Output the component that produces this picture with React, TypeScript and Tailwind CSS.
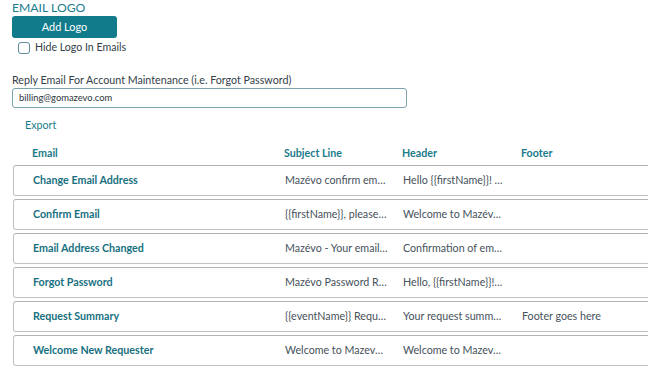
import React from "react";

const rows = [
  { name: "Change Email Address", subject: "Mazévo confirm em…", header: "Hello {{firstName}}! …", footer: "" },
  { name: "Confirm Email", subject: "{{firstName}}, please…", header: "Welcome to Mazév…", footer: "" },
  { name: "Email Address Changed", subject: "Mazévo - Your email…", header: "Confirmation of em…", footer: "" },
  { name: "Forgot Password", subject: "Mazévo Password R…", header: "Hello, {{firstName}}!…", footer: "" },
  { name: "Request Summary", subject: "{{eventName}} Requ…", header: "Your request summ…", footer: "Footer goes here" },
  { name: "Welcome New Requester", subject: "Welcome to Mazev…", header: "Welcome to Mazev…", footer: "" },
];

export default function App() {
  return (
    <div
      className="w-[648px] h-[372px] overflow-hidden bg-white text-[#4a5661]"
      style={{ fontFamily: "Lato, 'Open Sans', sans-serif" }}
    >
      <div className="pl-[12px]">
        <div className="h-[16px] flex items-center text-[12.2px] text-[#1a7b8c]">EMAIL LOGO</div>
        <button className="block w-[105px] h-[22px] rounded-[3px] bg-[#127b8b] text-white text-[10.9px] leading-[22px] text-center">
          Add Logo
        </button>
        <label className="flex items-center ml-[6px] h-[19px]">
          <span className="w-[12px] h-[12px] rounded-[3px] border border-[#5c8e9b] bg-white"></span>
          <span className="ml-[5px] text-[10.6px] text-[#333e47]">Hide Logo In Emails</span>
        </label>
        <div className="mt-[16px] h-[15px] flex items-center text-[10.7px] text-[#333e47]">
          Reply Email For Account Maintenance (i.e. Forgot Password)
        </div>
        <div className="w-[395px] h-[20px] rounded-[3px] border border-[#7aa3ad] flex items-center pl-[6px] text-[9.4px] text-[#2c353c]">
          billing@gomazevo.com
        </div>
        <div className="mt-[9px] ml-[13px] h-[17px] flex items-center text-[10.7px] text-[#1a7b8c]">Export</div>
      </div>

      <div className="mt-[11px] pl-[13px]">
        <div className="grid grid-cols-[252px_118px_119px_1fr] pl-[19px] w-[680px] h-[17px] items-center text-[10.7px] font-bold text-[#1a7b8c]">
          <div>Email</div>
          <div>Subject Line</div>
          <div>Header</div>
          <div>Footer</div>
        </div>
        <div className="mt-[3px] flex flex-col gap-[3px]">
          {rows.map((r) => (
            <div
              key={r.name}
              className="grid grid-cols-[252px_118px_119px_1fr] items-center pl-[19px] w-[680px] h-[31px] rounded-[3px] border border-[#c3c0c1] border-t-[#b5b2b3] text-[10.7px]"
            >
              <div className="font-bold text-[#17707f]">{r.name}</div>
              <div className="whitespace-nowrap overflow-hidden text-[#46515a]">{r.subject}</div>
              <div className="whitespace-nowrap overflow-hidden text-[#46515a]">{r.header}</div>
              <div className="text-[#46515a]">{r.footer}</div>
            </div>
          ))}
        </div>
      </div>
    </div>
  );
}
